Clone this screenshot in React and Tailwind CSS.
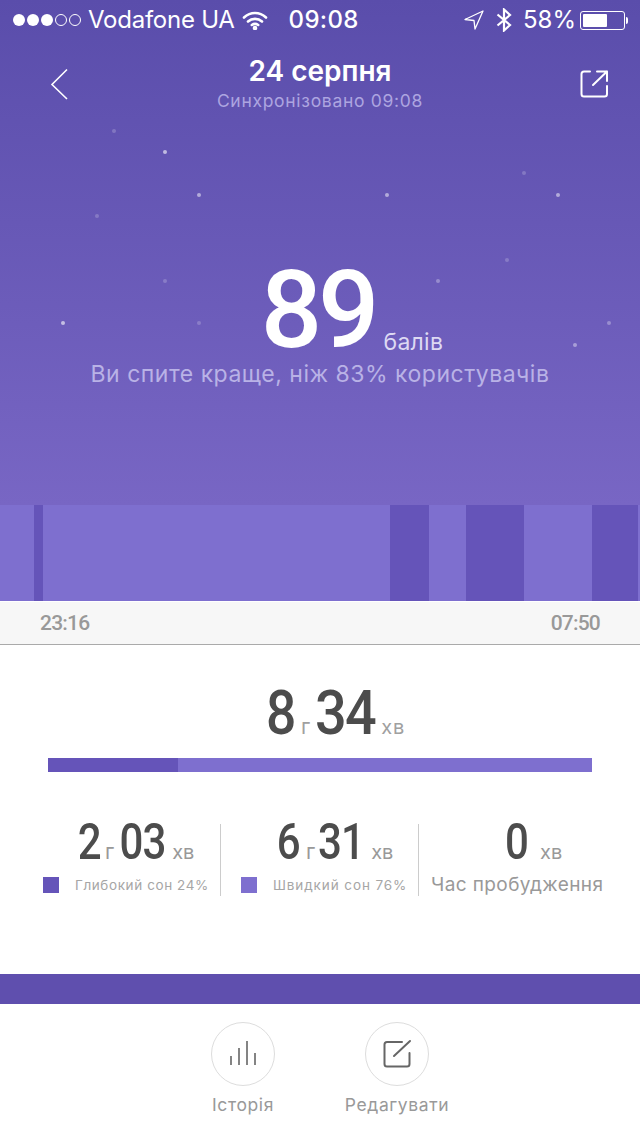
const stars = [
  { x: 114, y: 131, s: "opacity-20" },
  { x: 165, y: 152, s: "opacity-60" },
  { x: 199, y: 195, s: "opacity-50" },
  { x: 97, y: 216, s: "opacity-20" },
  { x: 165, y: 281, s: "opacity-20" },
  { x: 63, y: 323, s: "opacity-60" },
  { x: 199, y: 323, s: "opacity-20" },
  { x: 524, y: 173, s: "opacity-20" },
  { x: 387, y: 195, s: "opacity-50" },
  { x: 558, y: 195, s: "opacity-50" },
  { x: 507, y: 260, s: "opacity-20" },
  { x: 438, y: 281, s: "opacity-30" },
  { x: 609, y: 323, s: "opacity-30" },
  { x: 575, y: 345, s: "opacity-40" },
];

const segments = [
  { w: "w-[34px]", c: "bg-[#7e6fcf]" },
  { w: "w-[9px]", c: "bg-[#6554b9]" },
  { w: "w-[347px]", c: "bg-[#7e6fcf]" },
  { w: "w-[39px]", c: "bg-[#6554b9]" },
  { w: "w-[37px]", c: "bg-[#7e6fcf]" },
  { w: "w-[58px]", c: "bg-[#6554b9]" },
  { w: "w-[68px]", c: "bg-[#7e6fcf]" },
  { w: "w-[46px]", c: "bg-[#6554b9]" },
  { w: "w-[2px]", c: "bg-[#7e6fcf]" },
];

function Signal() {
  return (
    <div className="flex items-center gap-[2px]">
      <span className="w-[12px] h-[12px] rounded-full bg-white" />
      <span className="w-[12px] h-[12px] rounded-full bg-white" />
      <span className="w-[12px] h-[12px] rounded-full bg-white" />
      <span className="w-[12px] h-[12px] rounded-full border border-white" />
      <span className="w-[12px] h-[12px] rounded-full border border-white" />
    </div>
  );
}

function StatusBar() {
  return (
    <div className="h-[40px] flex items-center pl-[13px] pr-[12px] text-white text-[24px] font-['Inter',sans-serif]">
      <Signal />
      <span className="ml-[7px] tracking-[-0.25px]">Vodafone UA</span>
      <svg className="ml-[7px]" width="26" height="20" viewBox="0 0 26 20" fill="none" stroke="white" strokeWidth="2.6" strokeLinecap="round">
        <path d="M2 7.5C8.5 1.5 17.5 1.5 24 7.5" />
        <path d="M6 11.5C10 8 16 8 20 11.5" />
        <path d="M9.8 15C11.8 13.6 14.2 13.6 16.2 15" />
        <circle cx="13" cy="18" r="1" fill="white" />
      </svg>
      <span className="ml-[21px] font-medium tracking-[0.3px]">09:08</span>
      <div className="ml-auto flex items-center">
        <svg width="20" height="20" viewBox="0 0 20 20" fill="none" stroke="white" strokeWidth="1.3" strokeLinejoin="round">
          <path d="M19 1L1 9.5L10 10.5L11 19Z" />
        </svg>
        <svg className="ml-[12px]" width="16" height="24" viewBox="0 0 16 24" fill="none" stroke="white" strokeWidth="2.2">
          <path d="M1.5 6.5L14 17L8 22.5V1.5L14 7L1.5 17.5" />
        </svg>
        <span className="ml-[11px]">58%</span>
        <div className="ml-[4px] flex items-center">
          <div className="w-[45px] h-[19px] rounded-[3px] border border-white p-[2px]">
            <div className="h-full w-[24px] bg-white rounded-[1px]" />
          </div>
          <div className="w-[2px] h-[7px] bg-white rounded-r-[2px] ml-[1px]" />
        </div>
      </div>
    </div>
  );
}

function Header() {
  return (
    <div className="grid grid-cols-[1fr_auto_1fr] h-[72px]">
      <svg className="mt-[28px] ml-[50px]" width="18" height="32" viewBox="0 0 18 32" fill="none" stroke="white" strokeWidth="1.6">
        <path d="M17 1.5L2 16.5L17 31" />
      </svg>
      <div className="flex flex-col items-center pt-[13px]">
        <span className="text-white text-[28px] leading-[36px] font-semibold font-['Inter',sans-serif]">24 серпня</span>
        <span className="text-[#ada5e0] text-[17.5px] leading-[20px] font-['Inter',sans-serif] tracking-[0.7px] mt-[2px]">Синхронізовано 09:08</span>
      </div>
      <svg className="mt-[30px] ml-auto mr-[31px]" width="29" height="28" viewBox="0 0 29 28" fill="none" stroke="white" strokeWidth="2" strokeLinecap="round" strokeLinejoin="round">
        <path d="M10 1.5H4Q1.5 1.5 1.5 4V24Q1.5 26.5 4 26.5H24.5Q27 26.5 27 24V16" />
        <path d="M13 15L27 1.5M17 1.5H27V11" />
      </svg>
    </div>
  );
}

function Stat({ h, m, swatch, label, row, mBox, gGap, mGap, xvGap, keyPad, labelPad, labelTrack }) {
  return (
    <div className="flex flex-col">
      <div className={`h-[46px] flex items-baseline font-['Roboto',sans-serif] ${row}`}>
        {h && <span className="w-[23px] text-center text-[#4c4c4c] text-[50px] leading-[46px] font-medium scale-x-[.84]">{h}</span>}
        {h && <span className={`text-[#999999] text-[21px] leading-[46px] font-['Inter',sans-serif] ${gGap}`}>г</span>}
        <span className={`text-center text-[#4c4c4c] text-[50px] leading-[46px] font-medium tracking-[-1px] scale-x-[.84] whitespace-nowrap flex justify-center ${mBox} ${mGap}`}>{m}</span>
        <span className={`text-[#999999] text-[20px] leading-[46px] font-['Inter',sans-serif] ${xvGap}`}>хв</span>
      </div>
      {swatch ? (
        <div className={`flex items-center mt-[10px] ${keyPad}`}>
          <span className={`w-[16px] h-[16px] ${swatch}`} />
          <span className={`ml-[16px] text-[#a6a6a6] text-[13.5px] leading-[20px] font-['Inter',sans-serif] whitespace-nowrap ${labelTrack}`}>{label}</span>
        </div>
      ) : (
        <div className={`mt-[8px] text-[#999999] text-[19px] leading-[24px] font-['Inter',sans-serif] tracking-[0.4px] whitespace-nowrap ${labelPad}`}>{label}</div>
      )}
    </div>
  );
}

function Action({ label, children }) {
  return (
    <div className="w-[110px] flex flex-col items-center">
      <div className="w-[64px] h-[64px] rounded-full border border-[#dddddd] flex items-center justify-center">
        {children}
      </div>
      <span className="mt-[7px] text-[#999999] text-[17.5px] leading-[24px] font-['Inter',sans-serif] tracking-[0.6px]">{label}</span>
    </div>
  );
}

export default function App() {
  return (
    <div className="w-[640px] h-[1136px] bg-white overflow-hidden flex flex-col">
      <div className="relative h-[505px] bg-gradient-to-b from-[#5a4dab] to-[#7866c4]">
        {stars.map((star, i) => (
          <span
            key={i}
            className={`absolute w-[4px] h-[4px] rounded-full bg-white blur-[0.6px] ${star.s}`}
            style={{ left: star.x - 2, top: star.y - 2 }}
          />
        ))}
        <div className="relative">
          <StatusBar />
          <Header />
        </div>
        <div className="relative flex flex-col items-center mt-[155px]">
          <div className="flex items-baseline pl-[64px] font-['Roboto',sans-serif] text-white">
            <span className="text-[108px] leading-[87px] font-medium tracking-[-4px]">89</span>
            <span className="ml-[8px] translate-y-[3px] text-[23px] leading-[24px] font-['Inter',sans-serif] tracking-[0.3px] text-[#ddd9f3]">балів</span>
          </div>
          <span className="mt-[5px] text-[#b9b2e6] text-[23px] leading-[30px] font-['Inter',sans-serif] tracking-[0.5px]">Ви спите краще, ніж 83% користувачів</span>
        </div>
      </div>

      <div className="h-[96px] flex">
        {segments.map((seg, i) => (
          <div key={i} className={`${seg.w} ${seg.c}`} />
        ))}
      </div>

      <div className="h-[43px] mt-[1px] pt-[1px] bg-[#f7f7f7] border-b border-[#aaaaaa] px-[40px] flex items-center justify-between text-[#999999] text-[21px] font-medium font-['Roboto',sans-serif]">
        <span className="tracking-[-0.8px]">23:16</span>
        <span className="tracking-[-0.8px]">07:50</span>
      </div>

      <div className="flex-1 flex flex-col">
        <div className="h-[68px] mt-[34px] pl-[264px] flex items-baseline font-['Roboto',sans-serif]">
          <span className="w-[30px] text-center text-[#4c4c4c] text-[62px] leading-[68px] font-medium scale-x-[.86]">8</span>
          <span className="text-[#a0a0a0] text-[21px] font-['Inter',sans-serif] ml-[7px]">г</span>
          <span className="w-[62px] ml-[4px] flex justify-center text-[#4c4c4c] text-[62px] leading-[68px] font-medium tracking-[-2px] scale-x-90">34</span>
          <span className="text-[#a0a0a0] text-[20px] font-['Inter',sans-serif] ml-[5px] tracking-[1px]">хв</span>
        </div>

        <div className="mx-[48px] mt-[11px] h-[14px] flex">
          <div className="w-[130px] bg-[#6554b9]" />
          <div className="flex-1 bg-[#7e6fcf]" />
        </div>

        <div className="mt-[47px] flex pl-[40px]">
          <div className="w-[180px]">
            <Stat h="2" m="03" swatch="bg-[#6554b9]" label="Глибокий сон 24%" row="pl-[36px]" gGap="ml-[6px]" mBox="w-[47px]" mGap="ml-[5px]" xvGap="ml-[6px]" keyPad="pl-[3px]" labelTrack="tracking-[0.6px]" />
          </div>
          <div className="w-px h-[72px] bg-[#cccccc] mt-[5px]" />
          <div className="w-[197px]">
            <Stat h="6" m="31" swatch="bg-[#7e6fcf]" label="Швидкий сон 76%" row="pl-[54px]" gGap="ml-[8px]" mBox="w-[44px]" mGap="ml-[4px]" xvGap="ml-[8px]" keyPad="pl-[20px]" labelTrack="tracking-[0.9px]" />
          </div>
          <div className="w-px h-[72px] bg-[#cccccc] mt-[5px]" />
          <div>
            <Stat m="0" label="Час пробудження" row="pl-[86px]" mBox="w-[23px]" mGap="" xvGap="ml-[12px]" labelPad="pl-[12px]" />
          </div>
        </div>

        <div className="mt-auto h-[30px] bg-[#5f4fae]" />
        <div className="h-[132px] flex justify-center gap-[44px] pt-[18px]">
          <Action label="Історія">
            <svg width="28" height="28" viewBox="0 0 28 28" fill="none" stroke="#666666" strokeWidth="1.6">
              <path d="M2 16V25M10 8V25M18 1V25M26 13V25" />
            </svg>
          </Action>
          <Action label="Редагувати">
            <svg width="30" height="30" viewBox="0 0 30 30" fill="none" stroke="#666666" strokeWidth="2" strokeLinecap="round" strokeLinejoin="round">
              <path d="M20 3H5Q2.5 3 2.5 5.5V25Q2.5 27.5 5 27.5H25Q27.5 27.5 27.5 25V14" />
              <path d="M12 17L28 2" />
            </svg>
          </Action>
        </div>
      </div>
    </div>
  );
}
